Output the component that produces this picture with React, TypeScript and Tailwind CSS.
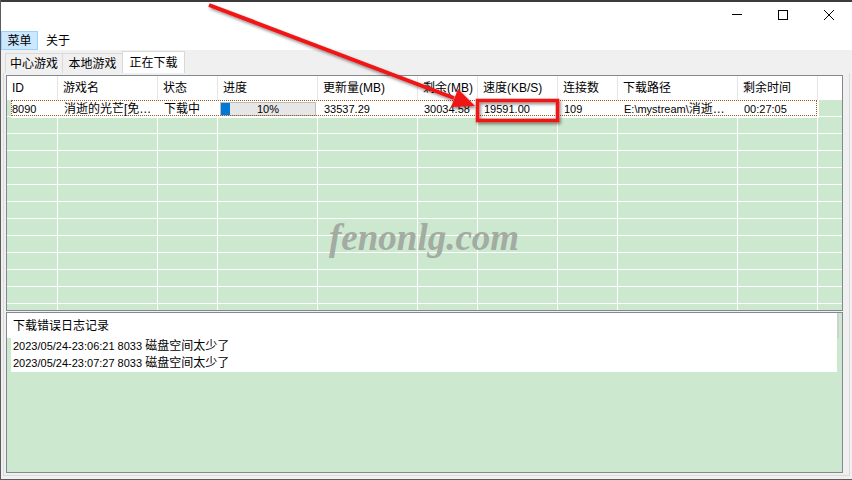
import React from 'react'

const headers = ['ID', '游戏名', '状态', '进度', '更新量(MB)', '剩余(MB)', '速度(KB/S)', '连接数', '下载路径', '剩余时间', '']
const gridCols = 'grid grid-cols-[51px_100px_60px_100px_100px_60px_80px_60px_120px_80px_1fr]'

function TitleButtons() {
    return (
        <div className="flex">
            {/* Minimize */}
            <div className="w-[46px] flex justify-center pt-[8px]">
                <svg width="10" height="10" viewBox="0 0 10 10">
                    <path d="M0 4.5H10" stroke="#000" strokeWidth="1" />
                </svg>
            </div>
            {/* Maximize */}
            <div className="w-[46px] flex justify-center pt-[8px]">
                <svg width="10" height="10" viewBox="0 0 10 10">
                    <rect x="0.5" y="0.5" width="9" height="9" fill="none" stroke="#000" strokeWidth="1" />
                </svg>
            </div>
            {/* Close */}
            <div className="w-[46px] flex justify-center pt-[8px]">
                <svg width="10" height="10" viewBox="0 0 10 10">
                    <path d="M0 0L10 10M10 0L0 10" stroke="#000" strokeWidth="1" />
                </svg>
            </div>
        </div>
    )
}

function LogLine({ stamp, msg }: { stamp: string; msg: string }) {
    return (
        <div>
            <span className="text-[11px]">{stamp} </span>
            <span>{msg}</span>
        </div>
    )
}

function App() {
    return (
        <div className="relative w-[852px] h-[480px] overflow-hidden bg-[#f0f0f0] border-l border-b border-[#5c5c5c] flex flex-col text-[12px] text-black font-['Liberation_Sans','Noto_Sans_CJK_SC',sans-serif]">
            {/* Desktop strip */}
            <div className="h-[2px] bg-[#3c3c3c]" />

            {/* Title bar */}
            <div className="h-[29px] bg-white flex justify-end">
                <TitleButtons />
            </div>

            {/* Menu bar */}
            <div className="h-[19px] bg-white flex items-stretch">
                <div className="w-[37px] bg-[#cce8ff] border border-[#99d1ff] flex items-center justify-center">菜单</div>
                <div className="ml-[8px] flex items-center">关于</div>
            </div>

            {/* Tabs */}
            <div className="h-[23px] flex items-end pl-[4px]">
                <div className="w-[58px] h-[20px] border border-b-0 border-[#d9d9d9] flex items-center justify-center">中心游戏</div>
                <div className="w-[60px] h-[20px] border border-l-0 border-b-0 border-[#d9d9d9] flex items-center justify-center">本地游戏</div>
                <div className="w-[63px] h-[22px] -ml-px bg-white border border-b-0 border-[#d9d9d9] flex items-center justify-center">正在下载</div>
            </div>

            {/* Tab page */}
            <div className="flex-1 mx-[2px] mb-[3px] border border-t-0 border-[#dadada] flex flex-col">
                {/* Download grid */}
                <div className="mt-[2px] ml-[2px] mr-[6px] h-[236px] border border-[#828790] bg-[#cce8cf] flex flex-col overflow-hidden">
                    {/* Header */}
                    <div className={`${gridCols} h-[24px] bg-white shrink-0`}>
                        {headers.map((h, i) => (
                            <div key={i} className={`pl-[5px] flex items-center ${i < 10 ? 'border-r border-[#e5e5e5]' : ''}`}>
                                {h}
                            </div>
                        ))}
                    </div>

                    {/* Data row */}
                    <div className={`${gridCols} relative h-[17px] shrink-0 border-b border-white`}>
                        <div className="ml-[4px] bg-white pl-[1px] flex items-center text-[11px]">8090</div>
                        <div className="bg-white pl-[6px] flex items-center whitespace-nowrap overflow-hidden">消逝的光芒[免…</div>
                        <div className="bg-white pl-[6px] flex items-center">下载中</div>
                        <div className="bg-white px-[2px] flex items-center">
                            <div className="relative w-full h-[14px] bg-[#e6e6e6] border border-[#bcbcbc]">
                                <div className="absolute left-0 top-0 bottom-0 w-[9px] bg-[#0078d7]" />
                                <div className="absolute inset-0 flex items-center justify-center text-[11px] leading-none">10%</div>
                            </div>
                        </div>
                        <div className="bg-white pl-[6px] flex items-center text-[11px]">33537.29</div>
                        <div className="bg-white pl-[6px] flex items-center text-[11px]">30034.58</div>
                        <div className="bg-white pl-[6px] flex items-center text-[11px]">19591.00</div>
                        <div className="bg-white pl-[6px] flex items-center text-[11px]">109</div>
                        <div className="bg-white pl-[6px] flex items-center whitespace-nowrap overflow-hidden text-[11px]">
                            E:\mystream\<span className="text-[12px]">消逝…</span>
                        </div>
                        <div className="bg-white pl-[6px] flex items-center text-[11px]">00:27:05</div>
                        <div className="border-l border-white" />
                        <div className="absolute left-[4px] right-[25px] top-0 bottom-0 border border-dotted border-[#9a5a20]" />
                    </div>

                    {/* Empty rows */}
                    {Array.from({ length: 12 }).map((_, r) => (
                        <div key={r} className={`${gridCols} h-[17px] shrink-0 border-b border-white`}>
                            {headers.map((_, i) => (
                                <div key={i} className={i < 10 ? 'border-r border-white' : ''} />
                            ))}
                        </div>
                    ))}
                </div>

                {/* Error log */}
                <div className="mt-[1px] ml-[2px] mr-[6px] h-[161px] border border-[#828790] bg-[#cce8cf] flex flex-col">
                    <div className="h-[25px] flex">
                        <div className="w-[830px] bg-white pl-[6px] flex items-center">下载错误日志记录</div>
                        <div className="w-[2px] bg-[#d0d0d0]" />
                    </div>
                    <div className="ml-[4px] w-[826px] bg-white pl-[2px] leading-[17px]">
                        <LogLine stamp="2023/05/24-23:06:21 8033" msg="磁盘空间太少了" />
                        <LogLine stamp="2023/05/24-23:07:27 8033" msg="磁盘空间太少了" />
                    </div>
                </div>
            </div>

            {/* Watermark */}
            <div className="absolute left-[328px] top-[219px] text-[37px] leading-none italic font-bold text-[#a3aba3] font-['Liberation_Serif',serif] pointer-events-none">
                fenonlg.com
            </div>

            {/* Red annotation */}
            <svg className="absolute inset-0 pointer-events-none" width="852" height="480" viewBox="0 0 852 480">
                <defs>
                    <filter id="sh" x="-20%" y="-20%" width="140%" height="140%">
                        <feDropShadow dx="1.5" dy="2" stdDeviation="1.5" floodColor="#000" floodOpacity="0.45" />
                    </filter>
                </defs>
                <g filter="url(#sh)">
                    <path d="M208 5L453 98" stroke="#f01414" strokeWidth="4" />
                    <path d="M474 106L450 107L457 89Z" fill="#f01414" />
                    <rect x="476.5" y="100.5" width="80" height="20" fill="none" stroke="#f01414" strokeWidth="3.5" />
                </g>
            </svg>
        </div>
    )
}

export default App
